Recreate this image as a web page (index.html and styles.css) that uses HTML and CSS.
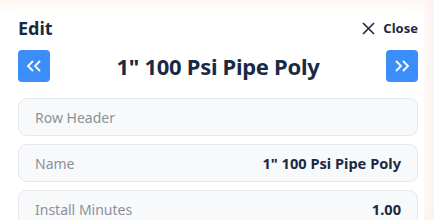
FILE: index.html
```html
<!DOCTYPE html>
<html lang="en">
<head>
    <meta charset="UTF-8">
    <meta name="viewport" content="width=device-width, initial-scale=1.0">
    <title>Edit</title>
    <link rel="stylesheet" href="styles.css">
</head>
<body>
    <div class="panel">
        <div class="panel-top">
            <h2>Edit</h2>
            <button class="close-btn">
                <svg width="13" height="13" viewBox="0 0 13 13"><path d="M1 1L12 12M12 1L1 12" stroke="#1a2a44" stroke-width="1.6" fill="none"/></svg>
                <span>Close</span>
            </button>
        </div>
        <div class="title-row">
            <button class="nav-btn">
                <svg width="16" height="12" viewBox="0 0 16 12"><path d="M7 1L2 6L7 11M14 1L9 6L14 11" stroke="#fff" stroke-width="1.8" fill="none"/></svg>
            </button>
            <h1>1" 100 Psi Pipe Poly</h1>
            <button class="nav-btn">
                <svg width="16" height="12" viewBox="0 0 16 12"><path d="M2 1L7 6L2 11M9 1L14 6L9 11" stroke="#fff" stroke-width="1.8" fill="none"/></svg>
            </button>
        </div>
        <div class="field">
            <span class="label">Row Header</span>
            <span class="value"></span>
        </div>
        <div class="field">
            <span class="label">Name</span>
            <span class="value">1" 100 Psi Pipe Poly</span>
        </div>
        <div class="field">
            <span class="label">Install Minutes</span>
            <span class="value">1.00</span>
        </div>
    </div>
</body>
</html>
```

FILE: styles.css
```css
body {
    margin: 0;
    background: #fdf1ec;
    font-family: "Noto Sans", "Open Sans", sans-serif;
    color: #1a2a44;
    overflow: hidden;
}

.panel {
    width: 424px;
    margin-top: 12px;
    background: #fff;
    box-shadow: 0 -6px 12px 4px #fff, 0 0 10px rgba(240, 190, 170, 0.25);
    padding: 0 6px 0 18px;
    box-sizing: border-box;
    height: 208px;
    overflow: hidden;
}

.panel-top {
    display: flex;
    justify-content: space-between;
    align-items: center;
    height: 32px;
}

.panel-top h2 {
    margin: 0;
    font-size: 18px;
    font-weight: 700;
}

.close-btn {
    display: flex;
    align-items: center;
    gap: 8px;
    border: none;
    background: none;
    padding: 0;
    font-family: inherit;
    font-size: 13px;
    font-weight: 700;
    color: #1a2a44;
}

.title-row {
    display: flex;
    align-items: center;
    justify-content: space-between;
    margin-top: 6px;
    margin-bottom: 16px;
}

.title-row h1 {
    margin: 0;
    font-size: 22px;
    font-weight: 700;
    letter-spacing: -0.3px;
}

.nav-btn {
    display: flex;
    align-items: center;
    justify-content: center;
    width: 32px;
    height: 32px;
    border: none;
    border-radius: 4px;
    background: #3b8ef8;
    padding: 0;
}

.field {
    display: flex;
    justify-content: space-between;
    align-items: center;
    height: 38px;
    box-sizing: border-box;
    margin-bottom: 8px;
    padding: 0 16px;
    border: 1px solid #e4e7eb;
    border-radius: 9px;
    background: #f8f9fb;
    font-size: 14px;
}

.label {
    color: #8b919a;
}

.value {
    font-weight: 700;
    font-size: 14.6px;
    color: #1a2a44;
}
```
